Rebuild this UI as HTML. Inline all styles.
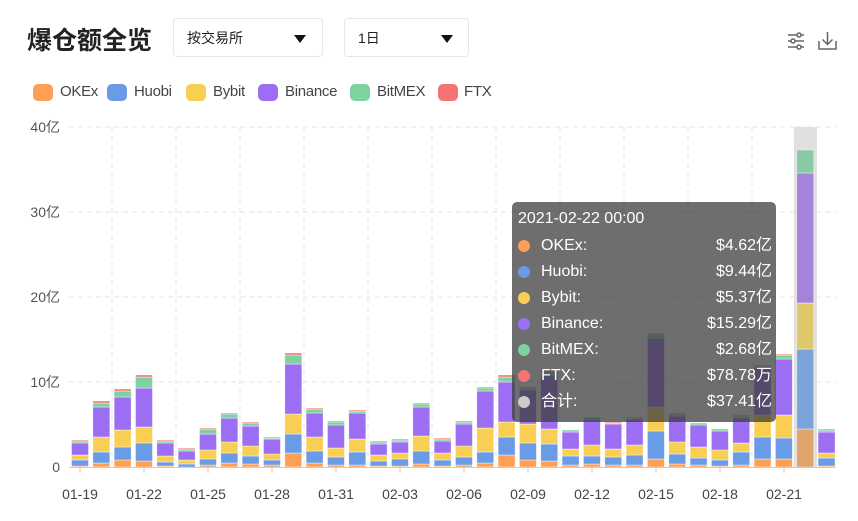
<!DOCTYPE html>
<html><head><meta charset="utf-8">
<style>
*{margin:0;padding:0;box-sizing:border-box}
body{width:858px;height:521px;background:#fff;font-family:"Liberation Sans","Noto Sans CJK SC",sans-serif;position:relative;overflow:hidden;color:#333}
.title{position:absolute;left:27px;top:21px;font-size:25px;font-weight:bold;color:#222;font-family:"Noto Sans CJK SC",sans-serif;line-height:36px}
.dd{position:absolute;top:18px;height:39px;border:1px solid #e6e6e6;border-radius:4px;font-size:14px;color:#222;font-family:"Liberation Sans","Noto Sans CJK SC",sans-serif}
.dd span{position:absolute;left:13px;top:10px;line-height:18px}
.dd i{position:absolute;top:16px;width:0;height:0;border-left:6px solid transparent;border-right:6px solid transparent;border-top:8px solid #111}
.leg b{position:absolute;top:84px;width:20px;height:17px;border-radius:5px}
.leg span{position:absolute;top:82px;font-size:15px;line-height:19px;color:#444;letter-spacing:-0.3px}
svg{position:absolute;left:0;top:0}
.tt{position:absolute;left:512px;top:202px;width:264px;height:220px;background:rgba(60,60,60,0.74);border-radius:5px;color:#fff;font-size:16px;font-family:"Liberation Sans","Noto Sans CJK SC",sans-serif}
.tt .h{position:absolute;left:6px;top:7px;line-height:20px}
.tt .r{position:absolute;left:6px;right:4px;height:20px;line-height:20px}
.tt .r b{position:absolute;left:0;top:4px;width:12px;height:12px;border-radius:50%}
.tt .r .n{position:absolute;left:23px;top:0;line-height:20px}
.tt .r .v{position:absolute;right:0;top:0;line-height:20px}
</style></head><body>
<div class="title">爆仓额全览</div>
<div class="dd" style="left:173px;width:150px"><span>按交易所</span><i style="left:120px"></i></div>
<div class="dd" style="left:344px;width:125px"><span>1日</span><i style="left:96px"></i></div>
<svg width="858" height="521" id="s">
<g stroke="#666" stroke-width="1.5" fill="none">
<line x1="788" y1="35" x2="804" y2="35"/><line x1="788" y1="41" x2="804" y2="41"/><line x1="788" y1="47" x2="804" y2="47"/>
<circle cx="799" cy="35" r="2" fill="#fff"/><circle cx="793" cy="41" r="2" fill="#fff"/><circle cx="799" cy="47" r="2" fill="#fff"/>
<path d="M819 41v8h17v-8M827.5 32v12M822.5 39.5l5 5 5-5"/>
</g>
</svg>
<div class="leg">
<b style="left:33px;background:#ff9f55"></b><span style="left:60px">OKEx</span>
<b style="left:107px;background:#6a9be6"></b><span style="left:134px">Huobi</span>
<b style="left:186px;background:#f9cf53"></b><span style="left:213px">Bybit</span>
<b style="left:258px;background:#9b6ef3"></b><span style="left:285px">Binance</span>
<b style="left:350px;background:#7dd3a0"></b><span style="left:377px">BitMEX</span>
<b style="left:438px;background:#f47272"></b><span style="left:464px">FTX</span>
</div>
<svg width="858" height="521" id="c"></svg>
<div class="tt">
<div class="h">2021-02-22 00:00</div>
<div class="r" style="top:34px"><b style="background:#ff9f55"></b><span class="n">OKEx:</span><span class="v">$4.62亿</span></div>
<div class="r" style="top:60px"><b style="background:#6a9be6"></b><span class="n">Huobi:</span><span class="v">$9.44亿</span></div>
<div class="r" style="top:86px"><b style="background:#f9cf53"></b><span class="n">Bybit:</span><span class="v">$5.37亿</span></div>
<div class="r" style="top:112px"><b style="background:#9b6ef3"></b><span class="n">Binance:</span><span class="v">$15.29亿</span></div>
<div class="r" style="top:138px"><b style="background:#7dd3a0"></b><span class="n">BitMEX:</span><span class="v">$2.68亿</span></div>
<div class="r" style="top:164px"><b style="background:#f47272"></b><span class="n">FTX:</span><span class="v">$78.78万</span></div>
<div class="r" style="top:190px"><b style="background:#ccc"></b><span class="n">合计:</span><span class="v">$37.41亿</span></div>
</div>
<script>
var d=[[466,460,455,443,441,440],[463,452,437,407,403,401],[460,447,430,397,391,389],[461,443,427,388,377,375],[466,462,456,443,441,440],[467,464,460,451,449,448],[465,459,450,434,429,428],[463,453,442,418,414,413],[464,456,446,426,423,422],[465,460,454,439,438,437],[453,434,414,364,355,353],[463,451,437,413,409,408],[465,457,448,425,422,421],[465,452,439,413,411,410],[466,461,455,444,442,441],[466,459,453,442,440,439],[464,451,436,407,404,403],[466,460,453,441,439,438],[465,457,446,424,422,421],[463,452,428,391,388,387],[455,437,422,382,377,375],[460,443,424,390,388,387],[461,444,429,375,371,369],[465,456,449,432,430,430],[464,456,445,419,417,417],[465,457,449,424,423,422],[465,455,445,419,418,417],[459,431,407,338,334,333],[464,454,442,416,414,413],[465,458,447,425,423,423],[466,460,450,431,429,429],[465,452,443,418,416,415],[459,437,415,368,366,365],[459,438,415,359,355,354],[429,349,303,173,150,150],[466,458,453,432,430,429]];
var col=["#ff9f55","#6a9be6","#f9cf53","#9b6ef3","#7dd3a0","#f47272"];
var mut=["#dea46c","#7ba4d9","#dec86a","#a384da","#89c9a6","#e08080"];
var s='';
[127,212,297,382].forEach(function(y){s+='<line x1="69" x2="836" y1="'+y+'" y2="'+y+'" stroke="#e4e4e4" stroke-dasharray="5,4"/>';});
for(var k=0;k<12;k++){var x=112+64*k;if(x<836)s+='<line x1="'+x+'" x2="'+x+'" y1="127" y2="467" stroke="#e4e4e4" stroke-dasharray="5,4"/>';}
s+='<rect x="794" y="127" width="23" height="340" fill="#e0e0e0"/>';
var lb=["40亿","30亿","20亿","10亿","0"];
[127,212,297,382,467].forEach(function(y,i){s+='<text x="60" y="'+(y+5)+'" text-anchor="end" font-size="14" fill="#555" font-family="Liberation Sans,Noto Sans CJK SC,sans-serif">'+lb[i]+'</text>';});
for(var i=0;i<d.length;i++){var cx=80+21.33*i,prev=467;var c=i==34?mut:col;
for(var j=0;j<6;j++){var t=d[i][j];if(prev-t>0)s+='<rect x="'+(cx-8.5)+'" y="'+t+'" width="17" height="'+(prev-t)+'" fill="'+c[j]+'" stroke="#fff" stroke-opacity="0.6" stroke-width="0.7"/>';prev=t;}}
s+='<line x1="69" x2="836" y1="467.5" y2="467.5" stroke="#ccc"/>';
var L=["01-19","01-22","01-25","01-28","01-31","02-03","02-06","02-09","02-12","02-15","02-18","02-21"];
L.forEach(function(t,i){var x=80+64*i;s+='<line x1="'+x+'" x2="'+x+'" y1="468" y2="473" stroke="#ccc"/><text x="'+x+'" y="499" text-anchor="middle" font-size="14" fill="#444" font-family="Liberation Sans,sans-serif">'+t+'</text>';});
document.getElementById('c').innerHTML=s;
</script>
</body></html>
